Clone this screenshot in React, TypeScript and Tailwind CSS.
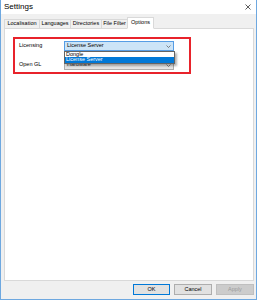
import type { ReactNode } from 'react'

const tabs = [
  { label: 'Localisation', w: 'w-[36px]' },
  { label: 'Languages', w: 'w-[32px]' },
  { label: 'Directories', w: 'w-[32px]' },
  { label: 'File Filter', w: 'w-[27px]' },
  { label: 'Options', w: 'w-[27px]', active: true },
]

function Chevron() {
  return (
    <svg width="5" height="3" viewBox="0 0 5 3" className="shrink-0">
      <path d="M0.5 0.5 L2.5 2.5 L4.5 0.5" fill="none" stroke="#555" strokeWidth="0.7" />
    </svg>
  )
}

function Button({ children, primary, disabled }: { children: ReactNode; primary?: boolean; disabled?: boolean }) {
  return (
    <div
      className={
        'flex items-center justify-center h-[11px] text-[5.5px] leading-none border ' +
        (primary
          ? 'w-[37px] bg-[#e1e1e1] border-[#0078d7] text-black'
          : disabled
            ? 'w-[38px] bg-[#cccccc] border-[#bfbfbf] text-[#9a9a9a]'
            : 'w-[38px] bg-[#e1e1e1] border-[#adadad] text-black')
      }
    >
      {children}
    </div>
  )
}

export default function App() {
  return (
    <div className="w-[257px] h-[300px] flex flex-col bg-[#f0f0f0] border-x border-b border-[#6ea8e0] font-['Liberation_Sans',Arial,sans-serif] text-black overflow-hidden">
      {/* title bar */}
      <div className="h-[14px] shrink-0 bg-white flex items-center justify-between pl-[3px] pr-[5px]">
        <span className="text-[8px] leading-none">Settings</span>
        <svg width="6" height="6" viewBox="0 0 6 6">
          <path d="M0.5 0.5 L5.5 5.5 M5.5 0.5 L0.5 5.5" stroke="#333" strokeWidth="0.8" />
        </svg>
      </div>

      <div className="flex-1 flex flex-col pl-[3px] pr-[2px]">
        {/* tabs */}
        <div className="h-[15px] shrink-0 flex items-end relative z-10 -mb-px">
          {tabs.map((t) => (
            <div
              key={t.label}
              className={
                t.w +
                ' -mr-px flex items-center justify-center text-[5.5px] leading-none border border-[#d9d9d9] ' +
                (t.active ? 'h-[12px] bg-white border-b-white' : 'h-[10px] bg-[#f0f0f0]')
              }
            >
              {t.label}
            </div>
          ))}
        </div>

        {/* panel */}
        <div className="flex-1 bg-white border border-[#d9d9d9] pl-[8px] pt-[8px]">
          <div className="w-[178px] h-[37px] border-2 border-[#e8232b] pl-[4px] pt-[2px]">
            <div className="flex items-center relative z-20">
              <span className="w-[45px] text-[5.5px] leading-none">Licensing</span>
              <div className="relative w-[110px]">
                <div className="h-[10px] bg-[#cce4f7] border border-[#569de5] flex items-center justify-between pl-[2px] pr-[2px] text-[5.5px] leading-none">
                  <span>License Server</span>
                  <Chevron />
                </div>
                {/* open dropdown list */}
                <div className="absolute top-full left-0 w-[111px] bg-white border border-[#646464] shadow-[2px_2px_2px_rgba(0,0,0,0.3)] text-[5.5px] leading-none">
                  <div className="h-[5px] flex items-center pl-[1px]">Dongle</div>
                  <div className="h-[6px] flex items-center pl-[1px] bg-[#0078d7] text-white">License Server</div>
                </div>
              </div>
            </div>
            <div className="flex items-center mt-[9px]">
              <span className="w-[45px] text-[5.5px] leading-none">Open GL</span>
              <div className="w-[110px] h-[10px] bg-[#e5e5e5] border border-[#adadad] flex items-center justify-between pl-[2px] pr-[2px] text-[5.5px] leading-none text-[#333]">
                <span>Hardware</span>
                <Chevron />
              </div>
            </div>
          </div>
        </div>

        {/* buttons */}
        <div className="h-[18px] shrink-0 flex justify-end gap-[4px] pt-[3px]">
          <Button primary>OK</Button>
          <Button>Cancel</Button>
          <Button disabled>Apply</Button>
        </div>
      </div>
    </div>
  )
}
